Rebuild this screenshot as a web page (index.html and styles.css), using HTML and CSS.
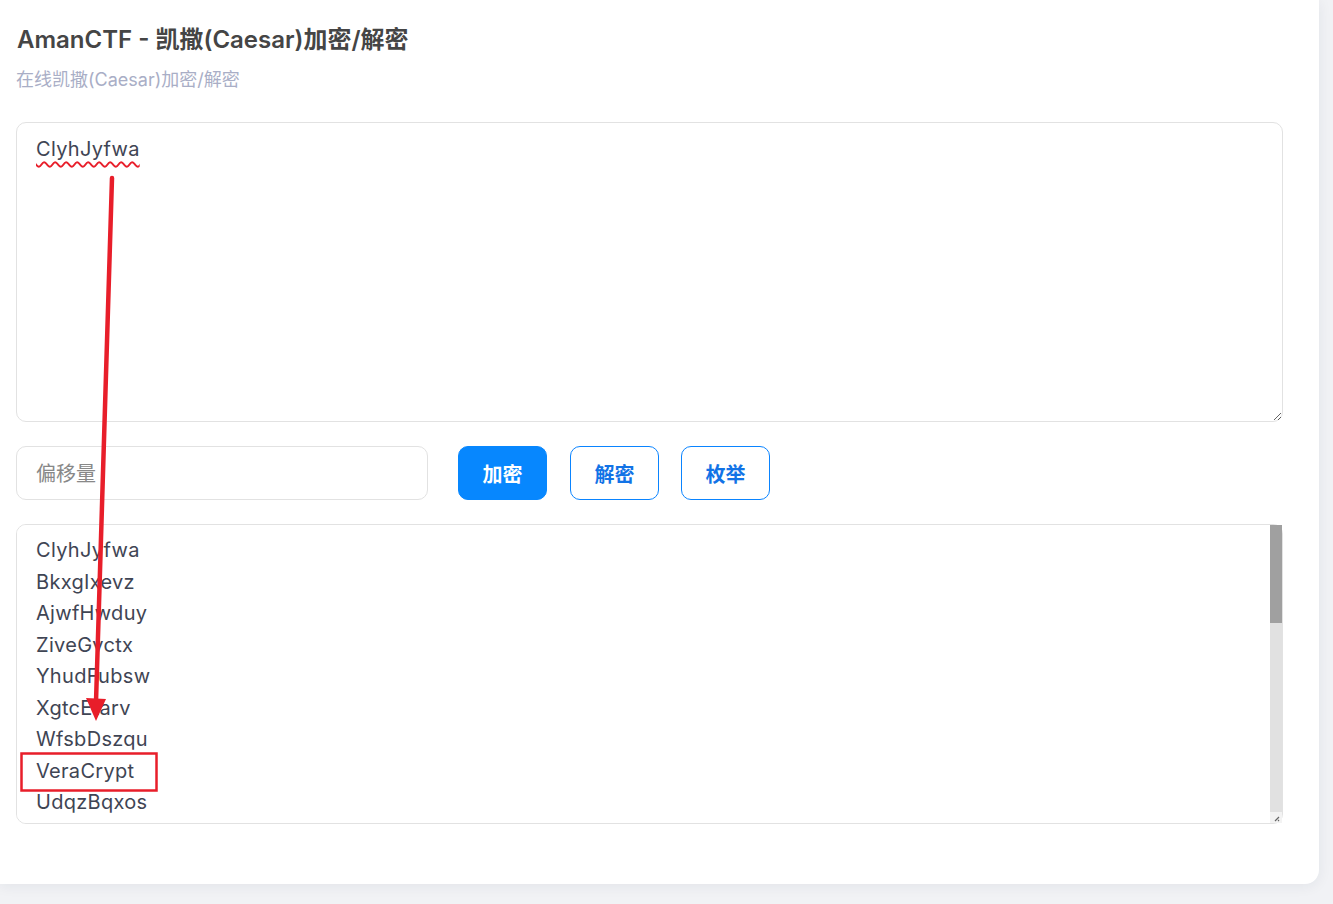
FILE: index.html
```html
<!DOCTYPE html>
<html lang="zh-CN">
<head>
<meta charset="utf-8">
<title>AmanCTF - 凯撒(Caesar)加密/解密</title>
<link rel="stylesheet" href="styles.css">
</head>
<body>
<div class="page">
  <div class="card">
    <h1 class="title">AmanCTF - 凯撒(Caesar)加密/解密</h1>
    <p class="subtitle">在线凯撒(Caesar)加密/解密</p>
    <textarea class="box source">ClyhJyfwa</textarea>
    <div class="controls">
      <input class="offset" type="text" placeholder="偏移量">
      <button class="btn btn-primary">加密</button>
      <button class="btn btn-outline">解密</button>
      <button class="btn btn-outline btn-last">枚举</button>
    </div>
    <div class="result-wrap">
      <textarea class="box result" spellcheck="false">ClyhJyfwa
BkxgIxevz
AjwfHwduy
ZiveGvctx
YhudFubsw
XgtcEtarv
WfsbDszqu
VeraCrypt
UdqzBqxos
TcpyApwnr
SboxZovmq
RanwYnulp
QzmvXmtko
PyluWlsjn
OxktVkrim
NwjsUjqhl
MvirTipgk
LuhqShofj
KtgpRgnei
JsfoQfmdh
IrenPelcg
HqdmOdkbf
GpclNcjae
FobkMbizd
EnajLahyc
DmziKzgxb</textarea>
      <div class="scrollbar"><div class="thumb"></div></div>
      <div class="scroll-corner">
        <svg width="12" height="11" viewBox="0 0 12 11"><path d="M5 9 L9 5 M8 9 L9 8" stroke="#666" stroke-width="1.2" fill="none"/></svg>
      </div>
    </div>
  </div>
  <svg class="annot" width="1333" height="904" viewBox="0 0 1333 904">
    <line x1="112" y1="178" x2="96" y2="702" stroke="#e81e2a" stroke-width="4.5" stroke-linecap="round"/>
    <polygon points="86,698 106,699 96,721" fill="#e81e2a"/>
    <rect x="21.5" y="753.5" width="135" height="37" fill="none" stroke="#e81e2a" stroke-width="2.5"/>
  </svg>
</div>
</body>
</html>
```
FILE: styles.css
```css
html, body {
  margin: 0;
  padding: 0;
}
body {
  background: #f1f2f5;
  font-family: Inter, "Noto Sans CJK SC", "Noto Sans", sans-serif;
  color: #3c4250;
}
.page {
  position: relative;
  width: 1333px;
  height: 904px;
  overflow: hidden;
}
.card {
  width: 1319px;
  box-sizing: border-box;
  background: #fff;
  border-radius: 0 0 14px 0;
  box-shadow: 0 2px 14px rgba(30, 40, 70, 0.07);
  padding: 24px 36px 60px 16px;
}
.title {
  margin: 0 0 0 1px;
  font-size: 24px;
  line-height: 32px;
  font-weight: 600;
  color: #454545;
}
.subtitle {
  margin: 11px 0 0 0;
  font-size: 18px;
  line-height: 26px;
  color: #a9aec6;
}
.box {
  display: block;
  width: 100%;
  height: 300px;
  box-sizing: border-box;
  border: 1px solid #e2e2e2;
  border-radius: 10px;
  font-family: Inter, "Noto Sans CJK SC", sans-serif;
  font-size: 20px;
  line-height: 31.5px;
  letter-spacing: 0.3px;
  color: #3f4554;
  padding: 11px 19px 9px 19px;
  outline: none;
  background: #fff;
}
.source {
  margin-top: 29px;
  text-decoration: underline wavy #e81e2a;
  text-decoration-thickness: 1.5px;
  text-underline-offset: 5px;
}
.controls {
  display: flex;
  align-items: center;
  margin-top: 24px;
  height: 54px;
}
.offset {
  width: 412px;
  height: 54px;
  box-sizing: border-box;
  border: 1px solid #e2e2e2;
  border-radius: 10px;
  padding: 2px 19px 0 19px;
  font-family: Inter, "Noto Sans CJK SC", sans-serif;
  font-size: 20px;
  color: #3c4250;
  outline: none;
}
.offset::placeholder {
  color: #888;
}
.btn {
  width: 89px;
  height: 54px;
  box-sizing: border-box;
  border-radius: 10px;
  font-family: "Noto Sans CJK SC", sans-serif;
  font-size: 20px;
  font-weight: 700;
  cursor: pointer;
  margin-left: 23px;
}
.btn-last {
  margin-left: 22px;
}
.btn-primary {
  margin-left: 30px;
  background: #0787fe;
  border: 1px solid #0787fe;
  color: #fff;
}
.btn-outline {
  background: #fff;
  border: 1px solid #0a84ff;
  color: #1273e6;
}
.result-wrap {
  position: relative;
  margin-top: 24px;
}
.result {
  resize: none;
  overflow-y: auto;
  padding-top: 10px;
}
.result::-webkit-scrollbar {
  width: 0;
}
.scrollbar {
  position: absolute;
  top: 1px;
  right: 1px;
  width: 12px;
  height: 287px;
  background: #e1e1e1;
}
.thumb {
  width: 12px;
  height: 98px;
  background: #a0a0a0;
}
.scroll-corner {
  position: absolute;
  right: 1px;
  top: 288px;
  width: 12px;
  height: 11px;
  background: #f3f3f3;
  display: flex;
}
.annot {
  position: absolute;
  left: 0;
  top: 0;
  pointer-events: none;
}
```
